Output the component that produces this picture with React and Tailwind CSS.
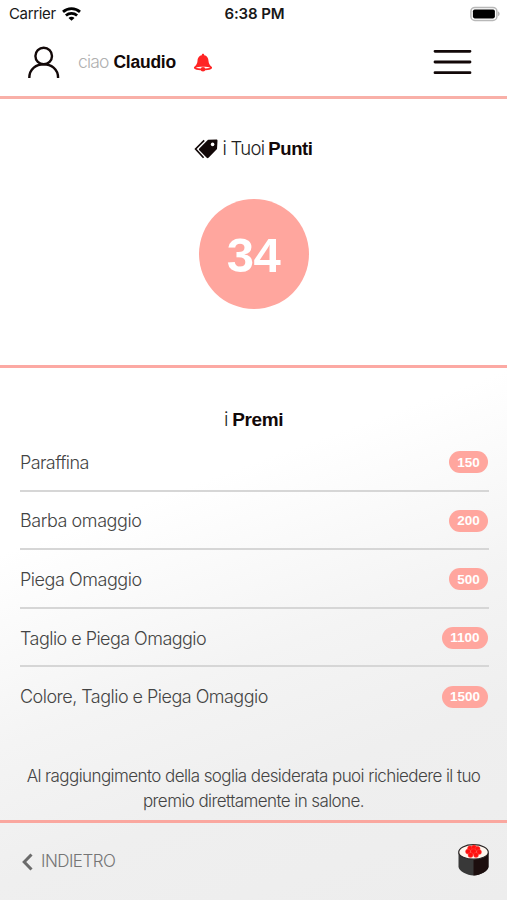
const rewards = [
  { name: 'Paraffina', points: '150', tracking: 'tracking-[-0.6px]', pill: 'w-[39px]' },
  { name: 'Barba omaggio', points: '200', tracking: 'tracking-[-0.43px]', pill: 'w-[39px]' },
  { name: 'Piega Omaggio', points: '500', tracking: 'tracking-[-0.45px]', pill: 'w-[39px]' },
  { name: 'Taglio e Piega Omaggio', points: '1100', tracking: 'tracking-[-0.54px]', pill: 'w-[46px]' },
  { name: 'Colore, Taglio e Piega Omaggio', points: '1500', tracking: 'tracking-[-0.52px]', pill: 'w-[46px]' },
];

function StatusBar() {
  return (
    <div className="grid h-7 grid-cols-3 items-center pl-[9px] pr-[7px] text-[15px] leading-7 text-[#181818]">
      <div className="flex items-center gap-[6px]">
        <span className="tracking-[-0.35px]">Carrier</span>
        <svg width="19" height="14" viewBox="0 0 19 14" fill="none" stroke="#000" strokeWidth="2.8">
          <path d="M1 4.9C5.8.6 13.2.6 18 4.9" />
          <path d="M3.9 8.5c3.2-2.8 8-2.8 11.2 0" />
          <path d="M6.5 10.9a4.2 4.2 0 0 1 6 0L9.5 13.8Z" fill="#000" stroke="none" />
        </svg>
      </div>
      <span className="whitespace-nowrap text-center font-semibold tracking-[-0.1px]">6:38 PM</span>
      <svg className="justify-self-end" width="31" height="16" viewBox="0 0 31 16">
        <rect x="1.9" y="1.4" width="26" height="13" rx="4" fill="#fff" stroke="#b8b8b8" strokeWidth="1.5" />
        <rect x="3.9" y="3.4" width="22" height="9" rx="1.8" fill="#000" />
        <path d="M29.2 5.6c1.8.7 1.8 3.9 0 4.6Z" fill="#aaa" />
      </svg>
    </div>
  );
}

function Header() {
  return (
    <header className="flex h-[68px] items-center pl-7 pr-[35px]">
      <svg width="32" height="33" viewBox="0 0 32 33" fill="none" stroke="#120808" strokeWidth="2.4">
        <circle cx="15.7" cy="10" r="8.3" />
        <path d="M1.3 32C1.3 13.7 30.1 13.7 30.1 32" />
      </svg>
      <p className="ml-[18px] flex w-[98px] items-baseline gap-[5px] whitespace-nowrap pt-px text-[17.5px]">
        <span className="font-light tracking-[-0.85px] text-[#b0b0b0]">ciao</span>
        <b className="font-['Liberation_Sans'] tracking-[-0.25px] text-[#120808]">Claudio</b>
      </p>
      <svg className="ml-[17px] mt-[2px]" width="20" height="20" viewBox="0 0 20 20">
        <path d="M10 .8c-.9 0-1.3.7-1.2 1.5C5.5 3 4.7 5.5 4.5 8c-.2 2.7-1.2 4.2-3.4 6.1-.8 1.7 1 3.3 8.9 3.3s9.7-1.6 8.9-3.3c-2.2-1.9-3.2-3.4-3.4-6.1-.2-2.5-1-5-4.3-5.7.1-.8-.3-1.5-1.2-1.5Z" fill="#ff2424" />
        <path d="M3 14.6c1.5-1 12.5-1 14 0-1.2 1.5-12.8 1.5-14 0Z" fill="#fff" />
        <ellipse cx="10" cy="16.3" rx="2.3" ry="2.2" fill="#ff2424" />
      </svg>
      <svg className="ml-auto" width="39" height="26" viewBox="0 0 39 26" stroke="#120808" strokeWidth="2.8" strokeLinecap="round">
        <path d="M2 2.3h35M2 13h35M2 23.7h35" />
      </svg>
    </header>
  );
}

function Tags() {
  return (
    <svg width="24" height="20" viewBox="0 0 24 20">
      <path d="M14 .8 22.3.6c.8 0 1.2.4 1.2 1.2l-.5 8.2-8.5 8.8c-.6.6-1.2.6-1.8 0L5.3 11.2c-.6-.6-.6-1.2 0-1.8Z" fill="#120808" />
      <circle cx="18.6" cy="5.4" r="1.8" fill="#fff" />
      <path d="M10.2 1.4 1.6 10l8 8.8" fill="none" stroke="#120808" strokeWidth="1.7" />
    </svg>
  );
}

function Sushi() {
  return (
    <svg width="31" height="32" viewBox="0 0 31 32">
      <path d="M.5 9v14C1 27 9 31.5 15.5 31.5S30 27 30.5 23V9Z" fill="#383838" />
      <path d="M15.5 16v15.5C22 31.5 30 27 30.5 23V9Z" fill="#1c0e0e" />
      <path d="M15.5.7C24 .7 30.3 4.2 30.3 8.2S23 15.2 15.5 15.2.7 12.2.7 8.2 7 .7 15.5.7Z" fill="#fff7ef" stroke="#292424" strokeWidth="1.2" />
      <g fill="#ff1010" stroke="#ff5147" strokeWidth=".4">
        <circle cx="12" cy="4.3" r="2.5" /><circle cx="16" cy="3.4" r="2.5" /><circle cx="19.6" cy="4.8" r="2.5" />
        <circle cx="10" cy="7.6" r="2.5" /><circle cx="15.5" cy="7.6" r="2.8" /><circle cx="21" cy="8" r="2.5" />
        <circle cx="12.5" cy="10.9" r="2.5" /><circle cx="18" cy="10.9" r="2.5" />
      </g>
    </svg>
  );
}

export default function App() {
  return (
    <div className="flex h-[900px] w-[507px] flex-col overflow-hidden bg-white font-['Inter',sans-serif] text-[#444]">
      <div className="h-[99px] shrink-0 border-b-[3px] border-[#f9b0a8]">
        <StatusBar />
        <Header />
      </div>
      <section className="flex h-[269px] shrink-0 flex-col items-center border-b-[3px] border-[#fca9a3] pt-[38px]">
        <h2 className="flex h-6 items-center gap-[4px] whitespace-nowrap text-[18.5px]">
          <Tags />
          <span className="font-light tracking-[-0.7px] text-[#222]">i Tuoi</span>
          <b className="font-['Liberation_Sans'] tracking-[-0.4px] text-[#120808]">Punti</b>
        </h2>
        <div className="mt-[38px] flex size-[110px] items-center justify-center rounded-full bg-[#ffa69e] pt-0.5 font-['Liberation_Sans'] text-[49px] font-bold leading-none tracking-[-0.5px] text-white">
          34
        </div>
      </section>
      <div className="flex flex-1 flex-col bg-[linear-gradient(160deg,#fff_0%,#fff_26%,#f4f4f4_53%,#efefef_72%,#ededed_100%)]">
        <section className="h-[452px] px-5 pt-10">
          <h2 className="flex h-6 items-center justify-center gap-1 text-[19px]">
            <span className="font-light text-[#222]">i</span>
            <b className="font-['Liberation_Sans'] tracking-[-0.4px] text-[#120808]">Premi</b>
          </h2>
          <ul className="mr-[-2px] mt-px flex flex-col">
            {rewards.map((r) => (
              <li key={r.name} className="flex h-[58.6px] items-center justify-between border-b-2 border-[#d6d6d6] pr-[1px] pt-[2px] last:border-transparent">
                <span className={`whitespace-nowrap pt-px text-lg font-light ${r.tracking}`}>{r.name}</span>
                <span className={`flex h-[22px] items-center justify-center rounded-full bg-[#ffa69e] font-['Liberation_Sans'] text-[13.5px] font-bold leading-none text-white ${r.pill}`}>{r.points}</span>
              </li>
            ))}
          </ul>
          <p className="mt-[38px] whitespace-nowrap text-center text-[17px] font-light leading-[25.5px] tracking-[-0.58px]">
            Al raggiungimento della soglia desiderata puoi richiedere il tuo<br />premio direttamente in salone.
          </p>
        </section>
        <footer className="flex h-20 items-center justify-between border-t-[3px] border-[#faa79f] pl-[22px] pr-[18px]">
          <div className="flex items-center gap-2 text-[17px] font-light tracking-[-0.55px] text-[#757575]">
            <svg width="11" height="18" viewBox="0 0 11 18" fill="none" stroke="#6b6b6b" strokeWidth="3">
              <path d="M9.5 1.5 2.2 9l7.3 7.5" />
            </svg>
            INDIETRO
          </div>
          <div className="-mt-1">
            <Sushi />
          </div>
        </footer>
      </div>
    </div>
  );
}
